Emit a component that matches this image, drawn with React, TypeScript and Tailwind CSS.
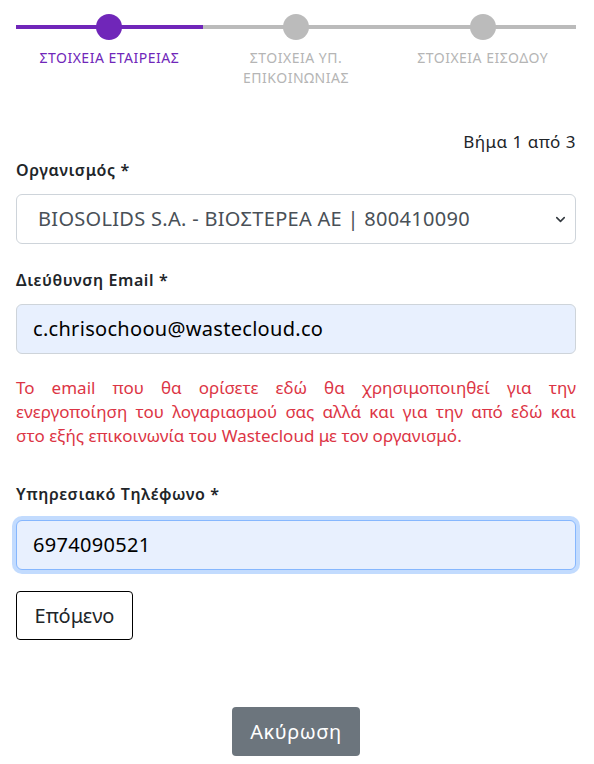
import { ChevronDown } from "lucide-react";

const steps = [
  { label: "ΣΤΟΙΧΕΙΑ ΕΤΑΙΡΕΙΑΣ", active: true },
  { label: "ΣΤΟΙΧΕΙΑ ΥΠ. ΕΠΙΚΟΙΝΩΝΙΑΣ", active: false },
  { label: "ΣΤΟΙΧΕΙΑ ΕΙΣΟΔΟΥ", active: false },
];

export default function App() {
  return (
    <div className="min-h-screen bg-white pl-4 pr-[18px] pt-[14px] text-[#212529] font-['Noto_Sans',sans-serif]">
      {/* Stepper */}
      <div className="grid grid-cols-3">
        {steps.map((s, i) => (
          <div key={i} className="flex flex-col items-center">
            <div className="relative flex h-[26px] w-full items-center justify-center">
              <div className={`absolute left-0 right-0 top-[11px] h-1 ${s.active ? "bg-[#7026b9]" : "bg-[#bbbbbb]"}`} />
              <div className={`relative h-[26px] w-[26px] rounded-full ${s.active ? "bg-[#7026b9]" : "bg-[#bbbbbb]"}`} />
            </div>
            <p className={`mt-[8px] max-w-[150px] text-center text-[14px] leading-5 tracking-[0.5px] ${s.active ? "text-[#7026b9]" : "text-[#b5b5b5]"}`}>
              {s.label}
            </p>
          </div>
        ))}
      </div>

      <p className="mt-[42px] text-right text-[17px] leading-6 tracking-[0.5px]">Βήμα 1 από 3</p>

      <label className="mt-[4px] block text-base font-semibold leading-6 tracking-[0.6px]">Οργανισμός *</label>
      <div className="relative mt-[12px]">
        <div className="flex h-[50px] items-center rounded-md border border-[#ced4da] bg-white pl-[21px] text-[20px] tracking-[0.3px] text-[#495057]">
          BIOSOLIDS S.A. - ΒΙΟΣΤΕΡΕΑ ΑΕ | 800410090
        </div>
        <ChevronDown className="absolute right-[8px] top-[18px] h-[15px] w-[15px] text-[#343a40]" strokeWidth={2.5} />
      </div>

      <label className="mt-[24px] block text-base font-semibold leading-6 tracking-[0.6px]">Διεύθυνση Email *</label>
      <div className="mt-[12px] flex h-[50px] items-center rounded-md border border-[#ced4da] bg-[#e8f0fe] pl-[16px] text-[20px] tracking-[0.3px] text-black">
        c.chrisochoou@wastecloud.co
      </div>

      <div className="mt-[22px] text-[17px] leading-6 text-[#dc3545]">
        <p className="text-justify [text-align-last:justify]">Το email που θα ορίσετε εδώ θα χρησιμοποιηθεί για την</p>
        <p className="text-justify [text-align-last:justify]">ενεργοποίηση του λογαριασμού σας αλλά και για την από εδώ και</p>
        <p>στο εξής επικοινωνία του Wastecloud με τον οργανισμό.</p>
      </div>

      <label className="mt-[34px] block text-base font-semibold leading-6 tracking-[0.6px]">Υπηρεσιακό Τηλέφωνο *</label>
      <div className="mt-[14px] flex h-[50px] items-center rounded-md border border-[#86b7fe] bg-[#e8f0fe] pl-[16px] text-[20px] tracking-[0.3px] text-black shadow-[0_0_0_4px_rgba(13,110,253,0.25)]">
        6974090521
      </div>

      <button className="mt-[21px] block h-[49px] w-[117px] rounded border border-black bg-white text-[20px] text-[#212529]">
        Επόμενο
      </button>

      <div className="mt-[67px] flex justify-center">
        <button className="h-[49px] w-[128px] rounded bg-[#6c757d] text-[20px] tracking-[0.5px] text-white">Ακύρωση</button>
      </div>
    </div>
  );
}
